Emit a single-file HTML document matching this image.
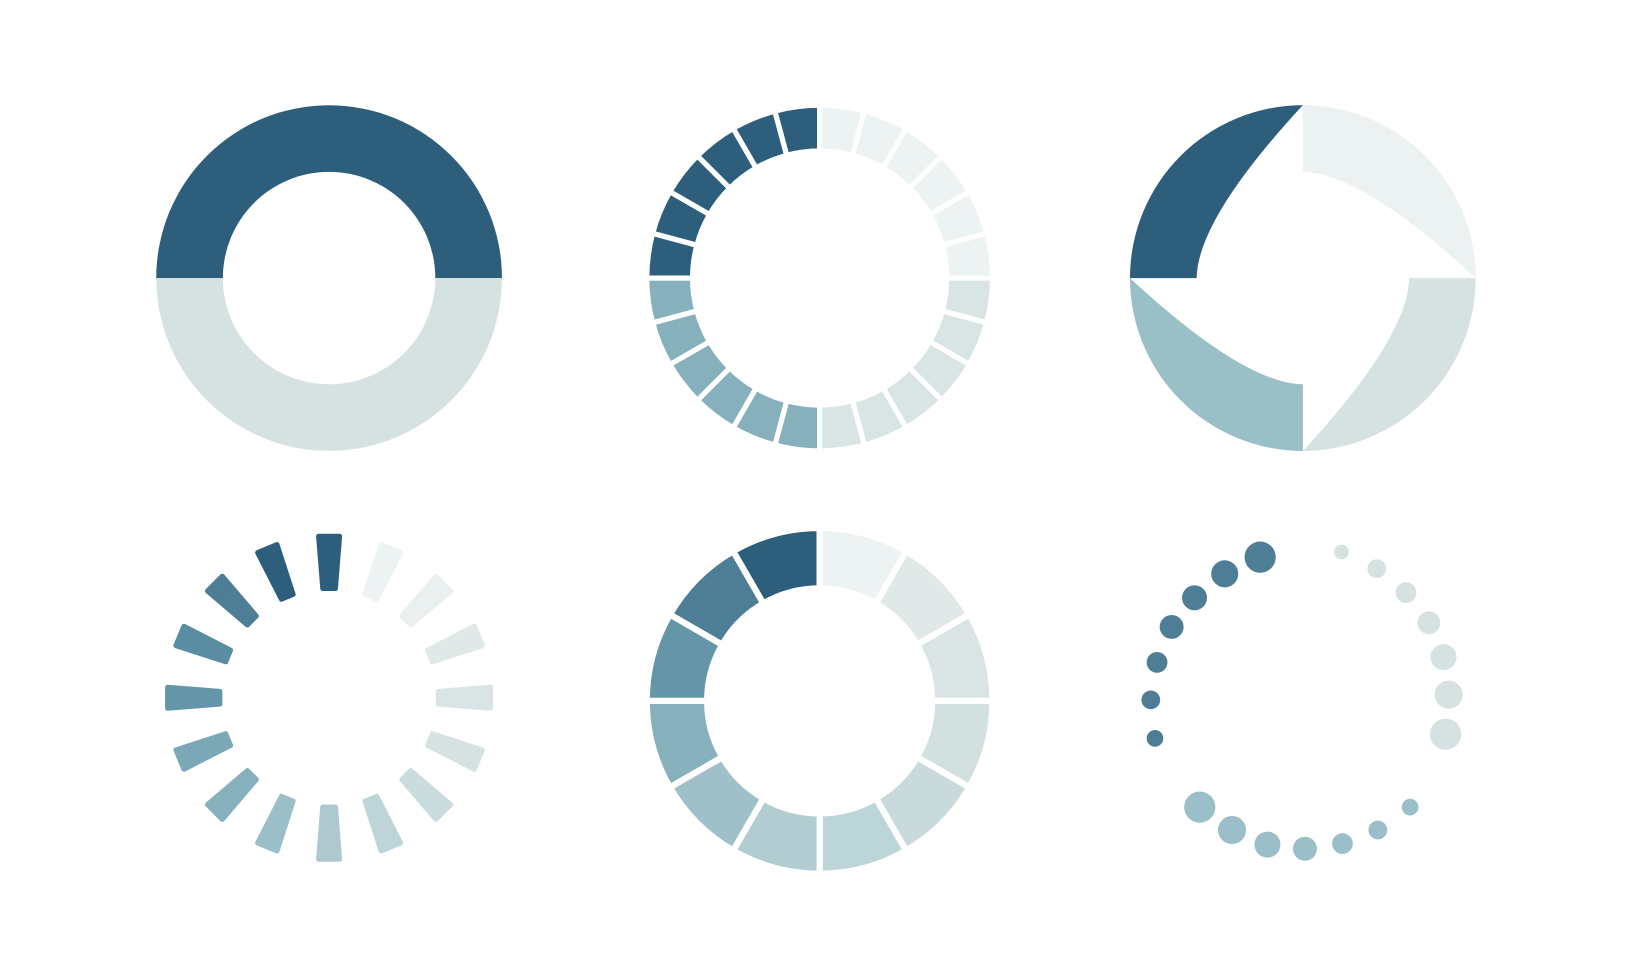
<!DOCTYPE html>
<html><head><meta charset="utf-8"><style>html,body{margin:0;padding:0;background:#fff;}svg{display:block}</style></head>
<body>
<svg id="s" width="1633" height="980" viewBox="0 0 1568 941" preserveAspectRatio="none" xmlns="http://www.w3.org/2000/svg">
<rect width="1568" height="941" fill="#fff"/>
<path d="M150,267 A166,166 0 0 1 482,267 L418,267 A102,102 0 0 0 214,267 Z" fill="#2d5f7d"/>
<path d="M150,267 A166,166 0 0 0 482,267 L418,267 A102,102 0 0 1 214,267 Z" fill="#d6e2e2"/>
<g>
<path d="M1085,267 A166,166 0 0 1 1251,101 Q1150,210 1149,267 Z" fill="#2d5f7d"/>
<path d="M1085,267 A166,166 0 0 1 1251,101 Q1150,210 1149,267 Z" transform="rotate(90 1251 267)" fill="#ecf2f2"/>
<path d="M1085,267 A166,166 0 0 1 1251,101 Q1150,210 1149,267 Z" transform="rotate(180 1251 267)" fill="#d6e2e2"/>
<path d="M1085,267 A166,166 0 0 1 1251,101 Q1150,210 1149,267 Z" transform="rotate(270 1251 267)" fill="#99bfc7"/>
</g>
<g id="g2"></g><g id="g5"></g><g id="g4"></g><g id="g6"></g>
</svg>
<script>
var NS="http://www.w3.org/2000/svg";
function P(cx,cy,r,a){var t=(a-90)*Math.PI/180;return [cx+r*Math.cos(t),cy+r*Math.sin(t)];}
function sector(cx,cy,R,r,a0,a1){var A=P(cx,cy,R,a0),B=P(cx,cy,R,a1),C=P(cx,cy,r,a1),D=P(cx,cy,r,a0);
return "M"+A+" A"+R+","+R+" 0 0 1 "+B+" L"+C+" A"+r+","+r+" 0 0 0 "+D+" Z";}
function add(g,d,f,extra){var p=document.createElementNS(NS,"path");p.setAttribute("d",d);p.setAttribute("fill",f);if(extra)for(var k in extra)p.setAttribute(k,extra[k]);document.getElementById(g).appendChild(p);}
function mix(a,b,t){var x=[1,3,5].map(function(i){return parseInt(a.substr(i,2),16)}),y=[1,3,5].map(function(i){return parseInt(b.substr(i,2),16)});
return "rgb("+x.map(function(v,i){return Math.round(v+(y[i]-v)*t)}).join(",")+")";}
for(var i=0;i<24;i++){var a=i*15;var q=Math.floor(i/6);var col=["#edf2f2","#d9e4e4","#85b0bc","#2d5f7d"][q];
add("g2",sector(787,267,166,122,a,a+15),col,{stroke:"#fff","stroke-width":"5"});}
var c5=["#edf2f2","#e0e8e8","#dae4e4","#d3e0e0","#c8dadc","#bcd5d8","#b2cdd2","#9fc0c8","#85b0bc","#6496a8","#4e7d96","#2d5f7d"];
for(var i=0;i<12;i++){add("g5",sector(787,673,166,108,i*30,i*30+30),c5[i],{stroke:"#fff","stroke-width":"6","stroke-linejoin":"round"});}
var c4=["#2d5f7d","#edf2f2","#eaf0f0","#e0e8e8","#dae4e4","#d6e2e2","#cbdcde","#bdd5d8","#adc9cf","#9bbfc8","#85b0bc","#7aa8b6","#6496a8","#5a8ca2","#4e7d96","#2d5f7d"];
for(var i=0;i<16;i++){var a=i*22.5;var col=c4[i];
var g=document.createElementNS(NS,"path");
g.setAttribute("d","M-10,-155 L10,-155 L6,-105 L-6,-105 Z");g.setAttribute("fill",col);g.setAttribute("stroke",col);g.setAttribute("stroke-width","5");g.setAttribute("stroke-linejoin","round");
g.setAttribute("transform","translate(316,670) rotate("+a+")");document.getElementById("g4").appendChild(g);}
var dots=[[1210,535,15,"#4e7d96"],[1176,551,13,"#4e7d96"],[1147,574,12,"#4e7d96"],[1125,602,11.5,"#4e7d96"],[1111,636,10,"#4e7d96"],[1105,672,9,"#4e7d96"],[1109,709,8,"#4e7d96"],
[1288,530,7,"#d6e2e2"],[1322,546,9,"#d6e2e2"],[1350,569,10,"#d6e2e2"],[1372,598,11,"#d6e2e2"],[1386,631,12.5,"#d6e2e2"],[1391,667,13.5,"#d6e2e2"],[1388,705,15,"#d6e2e2"],
[1152,775,15,"#9bbfc8"],[1183,797,13.5,"#9bbfc8"],[1217,811,12.5,"#9bbfc8"],[1253,815,11.5,"#9bbfc8"],[1289,810,10,"#9bbfc8"],[1323,797,9,"#9bbfc8"],[1354,775,8,"#9bbfc8"]];
dots.forEach(function(d){var c=document.createElementNS(NS,"circle");c.setAttribute("cx",d[0]);c.setAttribute("cy",d[1]);c.setAttribute("r",d[2]);c.setAttribute("fill",d[3]);document.getElementById("g6").appendChild(c);});
</script>
</body></html>
